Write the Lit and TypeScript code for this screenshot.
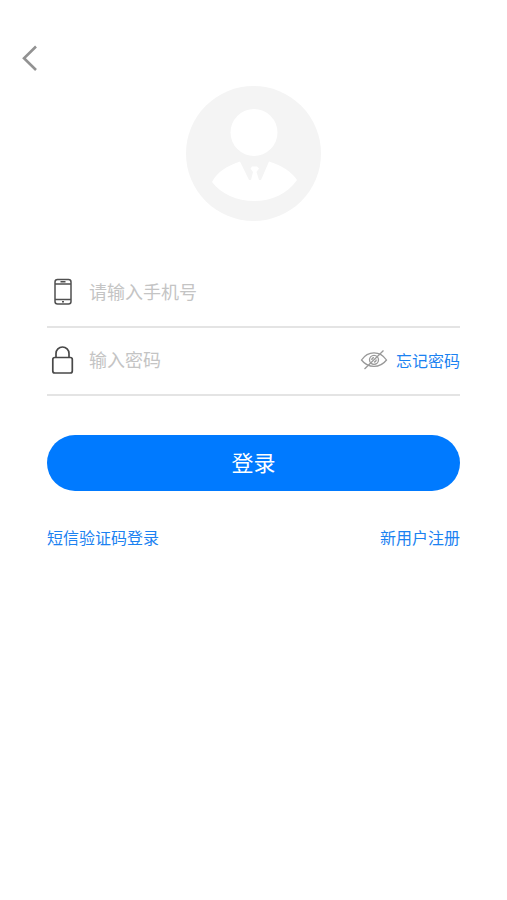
import { LitElement, html, css } from "lit";
import { customElement, state } from "lit/decorators.js";

@customElement("app-root")
export class AppRoot extends LitElement {
  @state() private visible = false;

  static styles = css`
    :host {
      display: block;
      min-height: 100vh;
      background: #fff;
      font-family: "Noto Sans CJK SC", sans-serif;
      font-size: 16px;
      line-height: 24px;
    }
    * {
      box-sizing: border-box;
    }
    svg {
      display: block;
      flex: none;
    }
    button,
    input {
      margin: 0;
      padding: 0;
      border: 0;
      background: none;
      font: inherit;
    }
    button {
      cursor: pointer;
    }
    a {
      color: #1b82f1;
      text-decoration: none;
      white-space: nowrap;
    }
    header {
      padding: 44px 20px 0;
    }
    .back {
      display: block;
    }
    main {
      padding: 14px 47px 40px;
    }
    .avatar {
      margin: 0 auto 39px;
    }
    .field {
      display: flex;
      align-items: center;
      height: 68px;
      padding-bottom: 2px;
      border-bottom: 2px solid #e4e4e4;
    }
    .field label {
      padding: 0 11px 0 0;
    }
    .field input {
      flex: 1;
      min-width: 0;
      height: 40px;
      padding-bottom: 2px;
      font-size: 18px;
      color: #333;
      outline: none;
    }
    .field input::placeholder {
      color: #c4c4c4;
      opacity: 1;
    }
    .eye {
      margin-right: 8px;
    }
    .submit {
      display: block;
      width: 100%;
      height: 56px;
      margin: 39px 0 34px;
      padding-bottom: 4px;
      border-radius: 28px;
      background: #007aff;
      color: #fff;
      font-size: 22px;
    }
    .links {
      display: flex;
      justify-content: space-between;
    }
  `;

  render() {
    return html`
      <header>
        <button class="back" aria-label="返回">
          <svg width="20" height="28" viewBox="0 0 20 28" fill="none" stroke="#929292" stroke-width="2.6">
            <path d="M16 2.5 4 14.2 16 26" />
          </svg>
        </button>
      </header>
      <main>
        <svg class="avatar" width="135" height="135" viewBox="0 0 135 135" aria-hidden="true">
          <circle cx="67.5" cy="67.5" r="67.5" fill="#f4f4f4" />
          <circle cx="68" cy="46.5" r="23.5" fill="#fff" />
          <path
            fill="#fff"
            d="M26 96C31 86 41 80 54 75.500L63 94H65L67 86 64.500 82.500 66 80.500H71L73 82.500 70.500 86 73 94H75L83 75.500C95 79 106 86 111 94C101 108 86 115 68 115C51 115 35 108 26 96Z"
          />
        </svg>
        <form @submit=${(e: Event) => e.preventDefault()}>
          <div class="field">
            <label for="phone" aria-label="手机号">
              <svg width="31" height="30" viewBox="0 0 31 30" fill="none" stroke="#505050" stroke-width="1.5">
                <rect x="8" y="2.500" width="16" height="24.500" rx="2.500" />
                <path d="M8 7H24M8 22.500H24M13.500 4.800H18.500" />
                <path d="M15 24.800H17" />
              </svg>
            </label>
            <input id="phone" type="tel" placeholder="请输入手机号" />
          </div>
          <div class="field">
            <label for="password" aria-label="密码">
              <svg width="31" height="30" viewBox="0 0 31 30" fill="none" stroke="#484848" stroke-width="1.700">
                <rect x="5.800" y="12.500" width="19.500" height="15.500" rx="2" />
                <path d="M9 12.500V8.500A6.500 6.500 0 0 1 22 8.500V12.500" />
              </svg>
            </label>
            <input id="password" type=${this.visible ? "text" : "password"} placeholder="输入密码" />
            <button
              class="eye"
              type="button"
              aria-label="显示密码"
              @click=${() => (this.visible = !this.visible)}
            >
              <svg width="28" height="22" viewBox="0 0 28 22" fill="none" stroke="#999" stroke-width="1.300">
                <path d="M1.500 11C8 1.500 20 1.500 26.500 11C20 19.500 8 19.500 1.500 11Z" />
                <circle cx="14" cy="10.800" r="4.500" />
                <path d="M11.800 11A2.300 2.300 0 0 1 14 8.700M14 13A2.300 2.300 0 0 0 16.200 10.500" />
                <path d="M4.500 20 23.500 1.500" />
              </svg>
            </button>
            <a href="#forgot">忘记密码</a>
          </div>
          <button class="submit" type="submit">登录</button>
          <nav class="links">
            <a href="#sms">短信验证码登录</a>
            <a href="#register">新用户注册</a>
          </nav>
        </form>
      </main>
    `;
  }
}
